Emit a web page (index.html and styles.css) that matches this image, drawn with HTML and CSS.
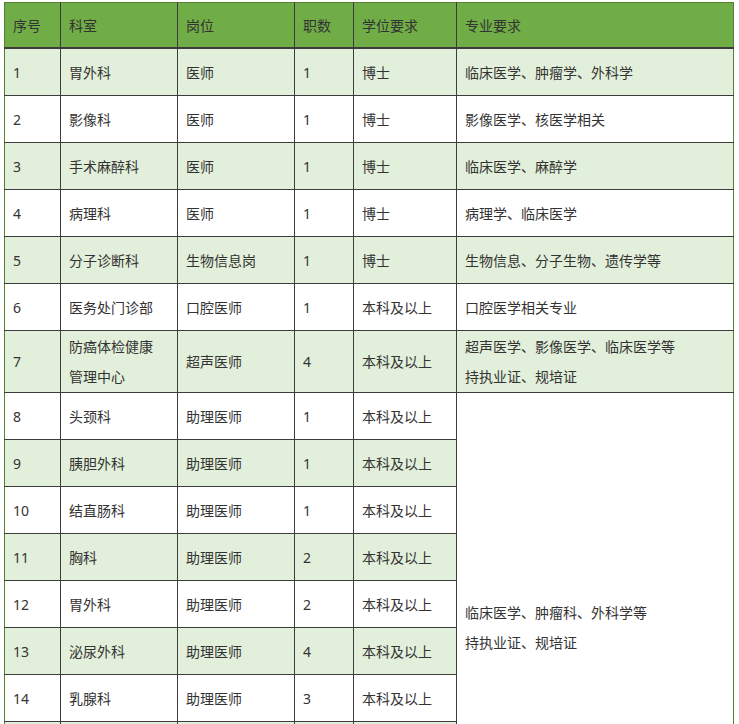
FILE: index.html
```html
<!DOCTYPE html>
<html lang="zh-CN">
<head>
<meta charset="utf-8">
<title>招聘岗位</title>
<link rel="stylesheet" href="styles.css">
</head>
<body>
<div class="wrap">
<table class="jobs">
  <colgroup>
    <col class="c1"><col class="c2"><col class="c3"><col class="c4"><col class="c5"><col class="c6">
  </colgroup>
  <thead>
    <tr class="head">
      <th>序号</th><th>科室</th><th>岗位</th><th>职数</th><th>学位要求</th><th>专业要求</th>
    </tr>
  </thead>
  <tbody>
    <tr class="odd"><td>1</td><td>胃外科</td><td>医师</td><td>1</td><td>博士</td><td>临床医学、肿瘤学、外科学</td></tr>
    <tr class="even"><td>2</td><td>影像科</td><td>医师</td><td>1</td><td>博士</td><td>影像医学、核医学相关</td></tr>
    <tr class="odd"><td>3</td><td>手术麻醉科</td><td>医师</td><td>1</td><td>博士</td><td>临床医学、麻醉学</td></tr>
    <tr class="even"><td>4</td><td>病理科</td><td>医师</td><td>1</td><td>博士</td><td>病理学、临床医学</td></tr>
    <tr class="odd"><td>5</td><td>分子诊断科</td><td>生物信息岗</td><td>1</td><td>博士</td><td>生物信息、分子生物、遗传学等</td></tr>
    <tr class="even"><td>6</td><td>医务处门诊部</td><td>口腔医师</td><td>1</td><td>本科及以上</td><td>口腔医学相关专业</td></tr>
    <tr class="odd"><td>7</td><td>防癌体检健康<br>管理中心</td><td>超声医师</td><td>4</td><td>本科及以上</td><td>超声医学、影像医学、临床医学等<br>持执业证、规培证</td></tr>
    <tr class="even"><td>8</td><td>头颈科</td><td>助理医师</td><td>1</td><td>本科及以上</td><td class="merged" rowspan="10">临床医学、肿瘤科、外科学等<br>持执业证、规培证</td></tr>
    <tr class="odd"><td>9</td><td>胰胆外科</td><td>助理医师</td><td>1</td><td>本科及以上</td></tr>
    <tr class="even"><td>10</td><td>结直肠科</td><td>助理医师</td><td>1</td><td>本科及以上</td></tr>
    <tr class="odd"><td>11</td><td>胸科</td><td>助理医师</td><td>2</td><td>本科及以上</td></tr>
    <tr class="even"><td>12</td><td>胃外科</td><td>助理医师</td><td>2</td><td>本科及以上</td></tr>
    <tr class="odd"><td>13</td><td>泌尿外科</td><td>助理医师</td><td>4</td><td>本科及以上</td></tr>
    <tr class="even"><td>14</td><td>乳腺科</td><td>助理医师</td><td>3</td><td>本科及以上</td></tr>
    <tr class="odd"><td></td><td></td><td></td><td></td><td></td></tr>
    <tr class="even"><td></td><td></td><td></td><td></td><td></td></tr>
    <tr class="odd"><td></td><td></td><td></td><td></td><td></td></tr>
  </tbody>
</table>
</div>
</body>
</html>
```

FILE: styles.css
```css
html, body {
  margin: 0;
  padding: 0;
  background: #ffffff;
}

.wrap {
  padding: 2px 0 0 4px;
}

.jobs {
  border-collapse: collapse;
  table-layout: fixed;
  width: 729px;
  font-family: "Noto Sans", "Noto Sans CJK SC", "Microsoft YaHei", sans-serif;
  font-size: 14px;
  color: #333333;
  border: 1px solid #548235;
}

.c1 { width: 56px; }
.c2 { width: 117px; }
.c3 { width: 117px; }
.c4 { width: 59px; }
.c5 { width: 103px; }
.c6 { width: 277px; }

.jobs th,
.jobs td {
  border: 1px solid #3c3c3c;
  padding: 1px 8px 0;
  height: 45px;
  line-height: 30px;
  text-align: left;
  vertical-align: middle;
  font-weight: normal;
  white-space: nowrap;
}

.jobs th {
  height: 43px;
  border-top-color: #548235;
  border-bottom: 2px solid #3c3c3c;
}

.jobs th:first-child,
.jobs td:first-child {
  border-left-color: #548235;
}

.jobs th:last-child,
.jobs td:last-child,
.jobs td.merged {
  border-right-color: #548235;
}

.head {
  background: #70ad47;
}

.odd {
  background: #e2efda;
}

.even {
  background: #ffffff;
}

.jobs td.merged {
  background: #ffffff;
}
```
